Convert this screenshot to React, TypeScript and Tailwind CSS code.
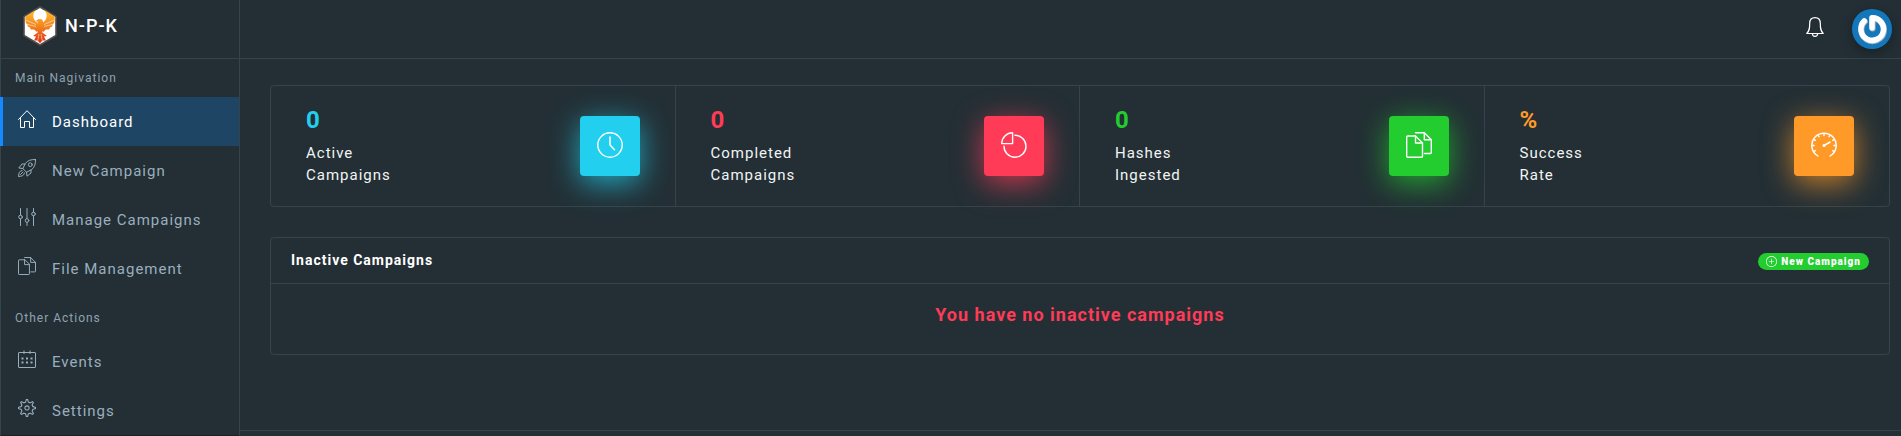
import React from 'react';
import { SlPlus } from 'react-icons/sl';
import { TfiSettings } from 'react-icons/tfi';

type IconProps = { className?: string };

const HomeIcon: React.FC<IconProps> = ({ className }) => (
  <svg viewBox="0 0 18 18" className={className} fill="none" stroke="currentColor" strokeLinecap="round" strokeLinejoin="round" aria-hidden="true">
    <path d="M0.500 9.500 L9 0.700 L17.500 9.500 M2.500 7.500 V17.500 H6.500 V11.500 H11.500 V17.500 H15.500 V7.500" />
  </svg>
);

const RocketIcon: React.FC<IconProps> = ({ className }) => (
  <svg viewBox="0 0 18 18" className={className} fill="none" stroke="currentColor" strokeLinecap="round" strokeLinejoin="round" aria-hidden="true">
    <path d="M17.500 0.500 C13 0.300 9.500 1.500 7.300 4.500 L4.800 9.500 L8.500 13.200 L13.500 10.700 C16.500 8.500 17.700 5 17.500 0.500 Z" />
    <circle cx="12.300" cy="5.700" r="1.900" />
    <path d="M7 5 H4 L0.800 9 L4.800 9.500 M13 11 V14 L9 17.200 L8.500 13.200" />
    <path d="M4 11.500 C1.500 12 0.700 14 0.500 17.500 C4 17.300 6 16.500 6.500 14 M2.500 15.500 L5 13" />
  </svg>
);

const SlidersIcon: React.FC<IconProps> = ({ className }) => (
  <svg viewBox="0 0 18 18" className={className} fill="none" stroke="currentColor" strokeLinecap="round" aria-hidden="true">
    <path d="M2.500 0.500 V7 M2.500 11 V17.500 M9 0.500 V10.500 M9 14.500 V17.500 M15.500 0.500 V4 M15.500 8 V17.500" />
    <circle cx="2.500" cy="9" r="1.800" />
    <circle cx="9" cy="12.500" r="1.800" />
    <circle cx="15.500" cy="6" r="1.800" />
  </svg>
);

const FilesIcon: React.FC<IconProps> = ({ className }) => (
  <svg viewBox="0 0 26 26" className={className} fill="none" stroke="currentColor" strokeWidth="1.400" strokeLinecap="round" strokeLinejoin="round" aria-hidden="true">
    <path d="M9.500 4 H1.700 Q0.700 4 0.700 5 V24.300 Q0.700 25.300 1.700 25.300 H15.500 Q16.500 25.300 16.500 24.300 V11 Z" />
    <path d="M9.500 4 V11 H16.500" />
    <path d="M9.500 0.800 H18.300 L25.300 7.800 V20.500 Q25.300 21.500 24.300 21.500 H18.500" />
    <path d="M18.300 0.800 V7.800 H25.300" />
  </svg>
);

const CalendarIcon: React.FC<IconProps> = ({ className }) => (
  <svg viewBox="0 0 18 18" className={className} fill="none" stroke="currentColor" aria-hidden="true">
    <rect x="0.500" y="2.500" width="17" height="15" rx="0.500" />
    <path d="M6 0.500 V4 M12 0.500 V4" />
    <path d="M3.500 8.500 H5.500 M8 8.500 H10 M12.500 8.500 H14.500 M3.500 12.500 H5.500 M8 12.500 H10 M12.500 12.500 H14.500" strokeWidth="2" />
  </svg>
);

const ClockIcon: React.FC<IconProps> = ({ className }) => (
  <svg viewBox="0 0 26 26" className={className} fill="none" stroke="currentColor" strokeWidth="1.400" strokeLinecap="round" aria-hidden="true">
    <circle cx="13" cy="13" r="12.200" />
    <path d="M13 5 V13 L17.500 17.700" strokeWidth="1.600" />
  </svg>
);

const PieIcon: React.FC<IconProps> = ({ className }) => (
  <svg viewBox="0 0 26 26" className={className} fill="none" stroke="currentColor" strokeWidth="1.400" strokeLinecap="round" strokeLinejoin="round" aria-hidden="true">
    <path d="M11.600 11.600 V0.700 A10.900 10.900 0 0 0 0.700 11.600 Z" />
    <path d="M14 3.200 A11 11 0 1 1 3 14.200" />
  </svg>
);

const GaugeIcon: React.FC<IconProps> = ({ className }) => (
  <svg viewBox="0 0 26 26" className={className} fill="none" stroke="currentColor" strokeWidth="1.400" strokeLinecap="round" aria-hidden="true">
    <path d="M7 24 A12.200 12.200 0 1 1 19 24" />
    <path d="M13 1.500 V3.500 M7 3 L8 4.700 M19 3 L18 4.700 M2.600 7.300 L4.300 8.300 M23.400 7.300 L21.700 8.300 M1 13.500 H3 M25 13.500 H23 M2.600 19.700 L4.300 18.700 M23.400 19.700 L21.700 18.700" />
    <path d="M13 13.500 L18.800 10.300" strokeWidth="1.800" />
    <circle cx="13" cy="13.500" r="1.500" fill="currentColor" stroke="none" />
  </svg>
);

const BellIcon: React.FC<IconProps> = ({ className }) => (
  <svg viewBox="0 0 18 20" className={className} fill="none" stroke="currentColor" strokeWidth="1.200" strokeLinecap="round" strokeLinejoin="round" aria-hidden="true">
    <path d="M9 0.700 C5.300 0.700 3.700 3.200 3.700 6.500 C3.700 11.500 3.500 13.500 0.800 16.500 H17.200 C14.500 13.500 14.300 11.500 14.300 6.500 C14.300 3.200 12.700 0.700 9 0.700 Z" />
    <path d="M6.300 16.800 C6.500 20.200 11.500 20.200 11.700 16.800" />
  </svg>
);

const Logo: React.FC = () => (
  <svg viewBox="0 0 34 40" className="w-[34px] h-10" aria-hidden="true">
    <defs>
      <linearGradient id="flame" gradientUnits="userSpaceOnUse" x1="0" y1="3" x2="0" y2="37">
        <stop offset="0" stopColor="#fcc12f" />
        <stop offset="0.500" stopColor="#f4861f" />
        <stop offset="1" stopColor="#dd3418" />
      </linearGradient>
    </defs>
    <path d="M17 1 L33 10.500 V29.500 L17 39 L1 29.500 V10.500 Z" fill="#fff" stroke="#514d4b" strokeWidth="1.600" />
    <g fill="url(#flame)">
      <path d="M13 3.800 L2.300 10.500 V14 L3 17 L4.500 18.500 L4.800 20.500 L7 21.500 L7.800 23.500 L11 23.500 L14 26 L14.500 17 C10 14 8.500 9 13 3.800 Z" />
      <path d="M21 3.800 L31.700 10.500 V14 L31 17 L29.500 18.500 L29.200 20.500 L27 21.500 L26.200 23.500 L23 23.500 L20 26 L19.500 17 C24 14 25.500 9 21 3.800 Z" />
      <path d="M13 15.300 C13.500 12.500 20 11.800 20 15.500 C20 17.500 21.500 18 21.300 20 C21 23 19.500 25 19 27 H15 C14.500 25 13 23 13.300 20 C13.300 18.500 15 17.500 14.800 15.800 Z" />
      <path d="M15.300 26 L10 30 L13 30.500 L11 34.500 L14.500 34.500 L17 37.300 L19.500 34.500 L23 34.500 L21 30.500 L24 30 L18.700 26 Z" />
    </g>
    <path
      fill="none"
      stroke="#fff"
      strokeWidth="0.500"
      d="M2.500 14 L13 18.500 M4.500 18.500 L13 20.500 M31.500 14 L21 18.500 M29.500 18.500 L21 20.500 M16 28 L14.800 34.500 M18 28 L19.200 34.500"
    />
  </svg>
);

const Avatar: React.FC = () => (
  <svg viewBox="0 0 40 40" className="size-10" aria-hidden="true">
    <circle cx="20" cy="20" r="20" fill="#1378bb" />
    <path
      d="M12.800 12.700 A11.300 11.300 0 1 0 20.600 9.500 V19.500"
      fill="none"
      stroke="#a9b4bb"
      strokeWidth="6"
      strokeLinecap="round"
      strokeLinejoin="round"
    />
    <path
      d="M12.200 12 A11.300 11.300 0 1 0 20 8.700 V18.800"
      fill="none"
      stroke="#fff"
      strokeWidth="5.500"
      strokeLinecap="round"
      strokeLinejoin="round"
    />
  </svg>
);

const mainLinks = [
  { icon: HomeIcon, label: 'Dashboard', href: '#dashboard', active: true },
  { icon: RocketIcon, label: 'New Campaign', href: '#new-campaign' },
  { icon: SlidersIcon, label: 'Manage Campaigns', href: '#campaigns' },
  { icon: FilesIcon, label: 'File Management', href: '#files' },
];

const otherLinks = [
  { icon: CalendarIcon, label: 'Events', href: '#events' },
  { icon: TfiSettings, label: 'Settings', href: '#settings' },
];

const stats = [
  {
    value: '0',
    lines: ['Active', 'Campaigns'],
    icon: ClockIcon,
    text: 'text-[#22cfee]',
    box: 'bg-[#22cfee] shadow-[0_7px_30px_rgba(34,207,238,0.75)]',
  },
  {
    value: '0',
    lines: ['Completed', 'Campaigns'],
    icon: PieIcon,
    text: 'text-[#ff3b57]',
    box: 'bg-[#ff3b57] shadow-[0_7px_30px_rgba(255,59,87,0.75)]',
  },
  {
    value: '0',
    lines: ['Hashes', 'Ingested'],
    icon: FilesIcon,
    text: 'text-[#23cc2f]',
    box: 'bg-[#23cc2f] shadow-[0_7px_30px_rgba(35,204,47,0.75)]',
  },
  {
    value: '%',
    lines: ['Success', 'Rate'],
    icon: GaugeIcon,
    text: 'text-[#ff9a28]',
    box: 'bg-[#ff9a28] shadow-[0_7px_30px_rgba(255,154,40,0.75)]',
  },
];

type NavLinkProps = {
  icon: React.ComponentType<IconProps>;
  label: string;
  href: string;
  active?: boolean;
};

const NavLink: React.FC<NavLinkProps> = ({ icon: Icon, label, href, active }) => (
  <li>
    <a
      href={href}
      className={
        active
          ? 'flex items-start h-[49px] pt-[13px] pl-[15px] border-l-3 border-[#1589ff] bg-[#1f4564] text-white'
          : 'flex items-start h-[49px] pt-[13px] pl-[18px] text-[#9aaebe] hover:text-white'
      }
    >
      <Icon className="size-[18px] mr-4" />
      <span className="leading-6">{label}</span>
    </a>
  </li>
);

const App: React.FC = () => {
  return (
    <div className="flex min-h-screen bg-[#232f35] font-['Roboto',sans-serif] text-[15px] tracking-[1px] text-[#f2f4f4]">
      {/* Sidebar */}
      <aside className="w-60 shrink-0 border-x border-b border-x-[#36434a] border-b-[#1b202b]">
        <a href="#home" className="flex items-start h-[59px] pl-[22px] pt-1.5 gap-2 border-b border-[#36434a] text-white">
          <Logo />
          <h5 className="text-lg font-medium leading-10">N-P-K</h5>
        </a>
        <nav className="-ml-px">
          <h6 className="h-[38px] pt-[11px] pl-[15px] text-xs text-[#90a2b0]">Main Nagivation</h6>
          <ul>
            {mainLinks.map((link) => (
              <NavLink key={link.label} {...link} />
            ))}
          </ul>
          <h6 className="h-11 pt-[17px] pl-[15px] text-xs text-[#90a2b0]">Other Actions</h6>
          <ul>
            {otherLinks.map((link) => (
              <NavLink key={link.label} {...link} />
            ))}
          </ul>
        </nav>
      </aside>

      <div className="flex flex-col flex-1">
        {/* Top bar */}
        <header className="flex items-center justify-end h-[59px] pr-[9px] gap-7 border-b border-[#36434a]">
          <button type="button" aria-label="Notifications" className="pb-1 text-white">
            <BellIcon className="w-[18px] h-5" />
          </button>
          <button type="button" aria-label="Account" className="rounded-full shadow-[0_4px_12px_rgba(0,0,0,0.3)]">
            <Avatar />
          </button>
        </header>

        <main className="flex-1 pt-[26px] pl-[30px] pr-[11px]">
          {/* Stats */}
          <section className="grid grid-cols-4 rounded border border-[#36434a] divide-x divide-[#36434a]">
            {stats.map((stat) => (
              <div key={stat.lines.join(' ')} className="flex items-center justify-between h-[120px] px-[35px]">
                <div>
                  <h4 className={`text-2xl font-bold ${stat.text}`}>{stat.value}</h4>
                  <p className="pt-1.5 pb-0.5 leading-[22px]">
                    {stat.lines[0]}
                    <br />
                    {stat.lines[1]}
                  </p>
                </div>
                <div className={`flex items-center justify-center size-[60px] rounded pb-0.5 text-white ${stat.box}`}>
                  <stat.icon className="size-[26px]" />
                </div>
              </div>
            ))}
          </section>

          {/* Inactive campaigns */}
          <section className="mt-[30px] rounded border border-[#36434a]">
            <div className="flex items-end justify-between h-[46px] pb-[13px] px-5 border-b border-[#36434a]">
              <h2 className="text-sm font-bold text-white">Inactive Campaigns</h2>
              <button
                type="button"
                className="flex items-center h-[17px] px-2 gap-1 rounded-full bg-[#23cc2f] text-[10px] font-black text-white"
              >
                <SlPlus className="size-[11px]" />
                New Campaign
              </button>
            </div>
            <p className="h-[70px] pt-[17px] text-center text-lg font-bold text-[#ff3b57]">
              You have no inactive campaigns
            </p>
          </section>
        </main>

        <footer className="h-1.5 border-t border-[#36434a]" />
      </div>
    </div>
  );
};

export default App;
